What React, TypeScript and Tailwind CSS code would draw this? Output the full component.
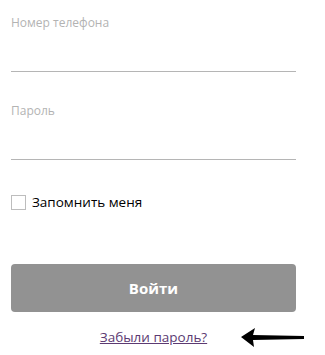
export default function App() {
  return (
    <div
      className="w-[325px] h-[355px] bg-white overflow-hidden"
      style={{ fontFamily: '"Open Sans", "Noto Sans", sans-serif' }}
    >
      <form className="flex flex-col pl-[11px] pr-[29px] pt-[15px]">
        {/* Phone */}
        <label className="flex flex-col">
          <span className="text-[12px] leading-[16px] text-[#b3b3b3]">Номер телефона</span>
          <input
            type="tel"
            className="mt-[25px] h-[16px] border-b border-[#b5b5b5] outline-none text-sm"
          />
        </label>

        {/* Password */}
        <label className="flex flex-col mt-[31px]">
          <span className="text-[12px] leading-[16px] text-[#b3b3b3]">Пароль</span>
          <input
            type="password"
            className="mt-[25px] h-[16px] border-b border-[#b5b5b5] outline-none text-sm"
          />
        </label>

        {/* Remember me */}
        <label className="flex items-center gap-[6px] mt-[34px]">
          <span className="w-[15px] h-[15px] border border-[#bdbdbd] bg-white" />
          <span className="text-[13.5px] leading-[16px] text-black">Запомнить меня</span>
        </label>

        <button
          type="button"
          className="mt-[54px] h-[48px] rounded-[4px] bg-[#929292] text-white text-[15px] font-bold"
        >
          Войти
        </button>

        <div className="relative mt-[16px] flex justify-center">
          <a href="#" className="text-[13.5px] leading-[18px] text-[#5c3a72] underline">
            Забыли пароль?
          </a>
          <svg
            className="absolute left-[230px] top-[-1px]"
            width="66"
            height="24"
            viewBox="0 0 66 24"
          >
            <path d="M0 10 L14 1 L12 8 L63 9 L63 12 L12 13 L13 20 Z" fill="#000" />
          </svg>
        </div>
      </form>
    </div>
  );
}
